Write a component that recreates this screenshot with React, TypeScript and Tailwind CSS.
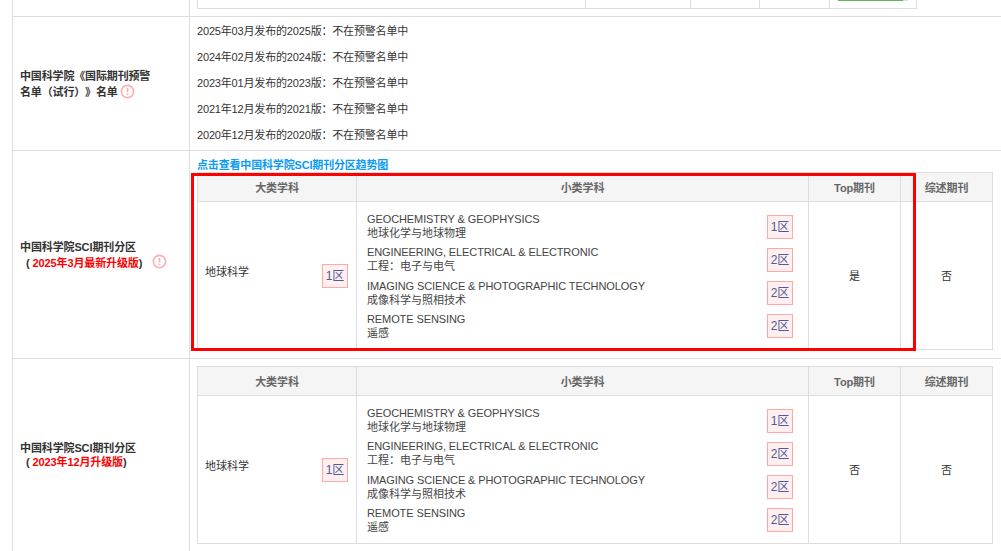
const FONT = "font-['Liberation_Sans','Noto_Sans_CJK_SC',sans-serif] [text-spacing-trim:space-all]";

const WARNINGS = [
  "2025年03月发布的2025版：不在预警名单中",
  "2024年02月发布的2024版：不在预警名单中",
  "2023年01月发布的2023版：不在预警名单中",
  "2021年12月发布的2021版：不在预警名单中",
  "2020年12月发布的2020版：不在预警名单中",
];

const SUBJECTS = [
  { en: "GEOCHEMISTRY & GEOPHYSICS", zh: "地球化学与地球物理", zone: "1区" },
  { en: "ENGINEERING, ELECTRICAL & ELECTRONIC", zh: "工程：电子与电气", zone: "2区" },
  { en: "IMAGING SCIENCE & PHOTOGRAPHIC TECHNOLOGY", zh: "成像科学与照相技术", zone: "2区" },
  { en: "REMOTE SENSING", zh: "遥感", zone: "2区" },
];

function InfoIcon({ className }: { className?: string }) {
  return (
    <svg viewBox="0 0 16 16" className={`inline-block h-[15px] w-[15px] ${className ?? ""}`}>
      <circle cx="8" cy="8" r="6.5" fill="none" stroke="#fcb0b0" strokeWidth="1.8" />
      <rect x="7.1" y="4" width="1.8" height="5" fill="#fcb0b0" />
      <rect x="7.1" y="10.2" width="1.8" height="1.8" fill="#fcb0b0" />
    </svg>
  );
}

function Zone({ label }: { label: string }) {
  return (
    <span className="flex h-[24px] w-[26px] shrink-0 items-center justify-center border border-[#ffa8a8] bg-[#ffefef] text-[12px] text-[#4f5a9c]">
      {label}
    </span>
  );
}

function HeadCell({ children, last }: { children: string; last?: boolean }) {
  return (
    <div
      className={`flex h-[28px] items-center justify-center border-l border-[#ddd] bg-[#f5f5f5] pt-[2px] text-[11px] font-bold tracking-[-0.1px] text-[#666] ${last ? "border-r" : ""}`}
    >
      {children}
    </div>
  );
}

function QuartileTable({ top }: { top: string }) {
  return (
    <div className="grid w-[796px] grid-cols-[159px_452px_92px_93px] border-y border-[#ddd]">
      <HeadCell>大类学科</HeadCell>
      <HeadCell>小类学科</HeadCell>
      <HeadCell>Top期刊</HeadCell>
      <HeadCell last>综述期刊</HeadCell>

      <div className="flex h-[148px] items-center justify-between border-t border-l border-[#ddd] pr-[8px] pl-[7px] text-[11px] text-[#333]">
        <span className="-mt-[7px]">地球科学</span>
        <Zone label="1区" />
      </div>
      <div className="flex flex-col justify-center border-t border-l border-[#ddd] pt-[2px] pr-[15px] pl-[10px]">
        {SUBJECTS.map((s) => (
          <div key={s.en} className="flex h-[33.2px] items-center justify-between">
            <div className="text-[#444]">
              <div className="mb-[1px] text-[11px] leading-[13px] tracking-[-0.1px]">{s.en}</div>
              <div className="text-[11px] leading-[13px]">{s.zh}</div>
            </div>
            <Zone label={s.zone} />
          </div>
        ))}
      </div>
      <div className="flex items-center justify-center border-t border-l border-[#ddd] pt-[2px] text-[11px] text-[#333]">{top}</div>
      <div className="flex items-center justify-center border-t border-x border-[#ddd] pt-[2px] text-[11px] text-[#333]">否</div>
    </div>
  );
}

export default function App() {
  return (
    <div className={`relative h-[551px] w-[1001px] overflow-hidden bg-white ${FONT}`}>
      {/* cut-off row from the section above */}
      <div className="ml-[12px] h-[16px] border-l border-[#ddd] pl-[176px]">
        <div className="h-full border-l border-[#ddd] pl-[7px]">
          <div className="grid h-[9px] w-[720px] grid-cols-[388px_105px_69px_70px_88px] border-r border-b border-[#ddd]">
            <div className="border-l border-[#ddd]" />
            <div className="border-l border-[#ddd]" />
            <div className="border-l border-[#ddd]" />
            <div className="border-l border-[#ddd]" />
            <div className="border-l border-[#ddd] pl-[8px]">
              <div className="h-px w-[70px] bg-[#e2e2e2]">
                <div className="h-px w-[65px] bg-[#5cb85c]" />
              </div>
            </div>
          </div>
        </div>
      </div>

      {/* 预警名单 */}
      <div className="ml-[12px] flex h-[134px] border-t border-l border-[#ddd]">
        <div className="flex w-[176px] shrink-0 items-center pl-[7px] text-[11px] leading-[16px] font-bold tracking-[-0.15px] text-[#333]">
          <div className="w-[140px] pt-[1px]">
            中国科学院《国际期刊预警名单（试行）》名单
            <InfoIcon className="ml-[2px] -mt-[4px] align-middle" />
          </div>
        </div>
        <div className="flex flex-1 flex-col border-l border-[#ddd] pt-[1px] pl-[7px] text-[11px] tracking-[-0.17px] text-[#333]">
          {WARNINGS.map((w) => (
            <div key={w} className="flex h-[26px] items-center">{w}</div>
          ))}
        </div>
      </div>

      {/* 2025 */}
      <div className="ml-[12px] flex h-[208px] border-t border-l border-[#ddd]">
        <div className="flex w-[176px] shrink-0 items-center pl-[7px] text-[11px] leading-[16px] font-bold tracking-[-0.12px] text-[#333]">
          <div>
            <div>中国科学院SCI期刊分区</div>
            <div className="flex items-center whitespace-nowrap pl-[6px]">
              <span>(</span>
              <span className="ml-[3px] text-[#f00]">2025年3月最新升级版</span>
              <span>)</span>
              <InfoIcon className="ml-[10px] -mt-[2px]" />
            </div>
          </div>
        </div>
        <div className="flex-1 border-l border-[#ddd] pl-[7px]">
          <div className="flex h-[21px] items-center pt-[7px] text-[11px] font-bold tracking-[-0.17px] text-[#0b9bf5]">点击查看中国科学院SCI期刊分区趋势图</div>
          <QuartileTable top="是" />
        </div>
      </div>

      {/* 2023 */}
      <div className="ml-[12px] flex h-[200px] border-t border-l border-[#ddd]">
        <div className="flex w-[176px] shrink-0 items-center pb-[7px] pl-[7px] text-[11px] leading-[14px] font-bold tracking-[-0.12px] text-[#333]">
          <div>
            <div>中国科学院SCI期刊分区</div>
            <div className="flex items-center whitespace-nowrap pl-[6px]">
              <span>(</span>
              <span className="ml-[3px] text-[#f00]">2023年12月升级版</span>
              <span>)</span>
            </div>
          </div>
        </div>
        <div className="flex-1 border-l border-[#ddd] pt-[7px] pl-[7px]">
          <QuartileTable top="否" />
        </div>
      </div>

      {/* highlight drawn over the 2025 table */}
      <div className="pointer-events-none absolute top-[173px] left-[191px] h-[178px] w-[725px] border-[3px] border-[#f00]" />
    </div>
  );
}
